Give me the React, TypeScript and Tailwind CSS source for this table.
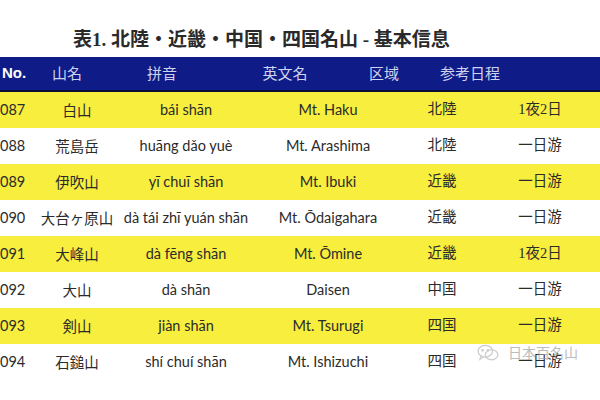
import React from "react";

const rows = [
  ["087", "白山", "bái shān", "Mt. Haku", "北陸", "1夜2日"],
  ["088", "荒島岳", "huāng dǎo yuè", "Mt. Arashima", "北陸", "一日游"],
  ["089", "伊吹山", "yī chuī shān", "Mt. Ibuki", "近畿", "一日游"],
  ["090", "大台ヶ原山", "dà tái zhī yuán shān", "Mt. Ōdaigahara", "近畿", "一日游"],
  ["091", "大峰山", "dà fēng shān", "Mt. Ōmine", "近畿", "1夜2日"],
  ["092", "大山", "dà shān", "Daisen", "中国", "一日游"],
  ["093", "剣山", "jiàn shān", "Mt. Tsurugi", "四国", "一日游"],
  ["094", "石鎚山", "shí chuí shān", "Mt. Ishizuchi", "四国", "一日游"],
];

export default function App() {
  return (
    <div className="relative w-[600px] h-[400px] bg-white overflow-hidden">
      <div className="h-[57px] flex items-end pb-[8px] pl-[73px]">
        <div className="text-[19px] font-bold text-[#2a2a2a] leading-none whitespace-nowrap font-['Liberation_Serif','Noto_Sans_CJK_JP',serif]">
          表1. 北陸・近畿・中国・四国名山 - 基本信息
        </div>
      </div>
      <div className="h-[35px] bg-[#0f1b87] border-b-[2px] border-[#0a0f3a] grid grid-cols-[40px_54px_136px_110px_88px_84px_1fr] items-center text-[15px] text-[#cfd3ee] font-['Noto_Sans_CJK_JP','Noto_Sans_CJK_SC',sans-serif]">
        <div className="pl-[2px] font-bold text-white text-[15px] font-['Liberation_Sans',sans-serif]">No.</div>
        <div className="text-center">山名</div>
        <div className="text-center">拼音</div>
        <div className="text-center">英文名</div>
        <div className="text-center">区域</div>
        <div className="text-center">参考日程</div>
        <div />
      </div>
      {rows.map((r, i) => (
        <div
          key={r[0]}
          className={`h-[36px] grid grid-cols-[40px_74px_144px_140px_88px_108px_1fr] items-center text-[14.5px] text-[#2b2b2b] ${i % 2 === 0 ? "bg-[#f7ee3e]" : "bg-white"}`}
        >
          <div className="font-['Lato',sans-serif]">{r[0]}</div>
          <div className="text-center whitespace-nowrap font-['Noto_Sans_CJK_JP','Noto_Sans_CJK_SC',sans-serif]">{r[1]}</div>
          <div className="text-center whitespace-nowrap font-['Lato',sans-serif]">{r[2]}</div>
          <div className="text-center whitespace-nowrap font-['Lato',sans-serif]">{r[3]}</div>
          <div className="text-center font-['Liberation_Serif','Noto_Sans_CJK_JP',serif]">{r[4]}</div>
          <div className="text-center font-['Liberation_Serif','Noto_Sans_CJK_JP',serif]">{r[5]}</div>
          <div />
        </div>
      ))}
      <div className="absolute left-[476px] top-[342px] flex items-center gap-[8px] opacity-70">
        <svg width="24" height="18" viewBox="0 0 26 20" fill="none" stroke="#b8b8b8" strokeWidth="1.4">
          <ellipse cx="10" cy="8" rx="8" ry="6.5" />
          <path d="M5 13.5 L4 17 L8 14.5" />
          <ellipse cx="17" cy="12" rx="7" ry="5.5" />
          <circle cx="7" cy="7" r="0.8" fill="#b8b8b8" />
          <circle cx="13" cy="7" r="0.8" fill="#b8b8b8" />
        </svg>
        <div className="text-[14px] text-[#a0a0a0] font-['Noto_Sans_CJK_JP','Noto_Sans_CJK_SC',sans-serif]">日本百名山</div>
      </div>
    </div>
  );
}
